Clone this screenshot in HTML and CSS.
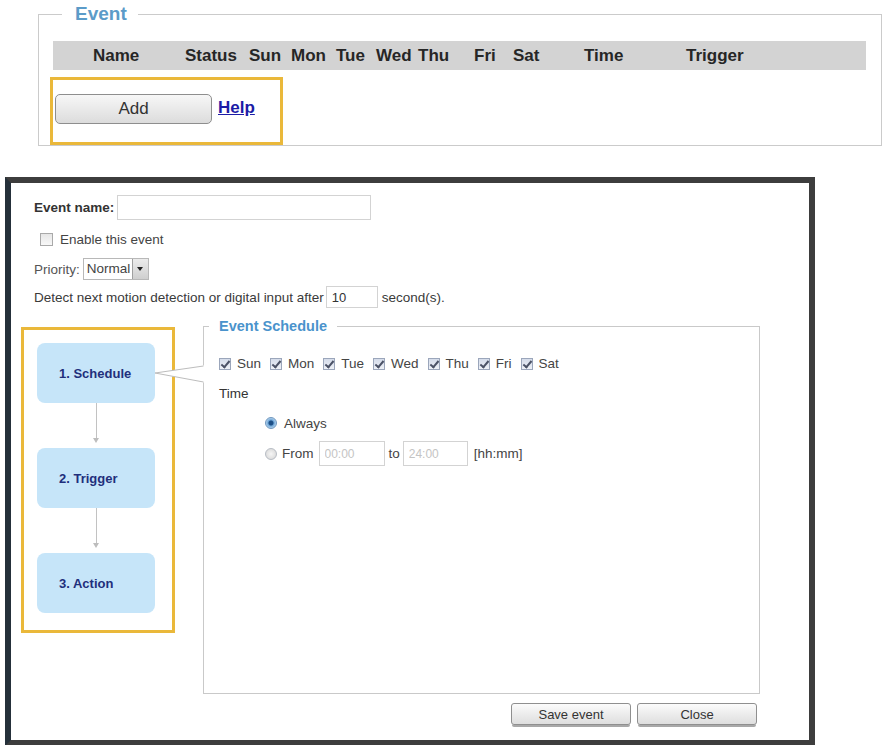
FILE: index.html
```html
<!DOCTYPE html>
<html>
<head lang="en">
    <meta charset="UTF-8">
    <title>Event</title>
    <link rel="stylesheet" href="styles.css">
</head>
<body>
<fieldset id="event">
    <legend>Event</legend>
    <div class="thead">
        <span class="c-name">Name</span>
        <span class="c-status">Status</span>
        <span class="c-sun">Sun</span>
        <span class="c-mon">Mon</span>
        <span class="c-tue">Tue</span>
        <span class="c-wed">Wed</span>
        <span class="c-thu">Thu</span>
        <span class="c-fri">Fri</span>
        <span class="c-sat">Sat</span>
        <span class="c-time">Time</span>
        <span>Trigger</span>
    </div>
    <div class="mark add-row">
        <button class="btn-add">Add</button>
        <a href="#" class="help">Help</a>
    </div>
</fieldset>

<div id="dialog">
    <div class="row r-name">
        <label class="bold">Event name:</label>
        <input type="text" class="txt name-in">
    </div>
    <div class="row r-enable">
        <span class="cb"></span>
        <span class="lbl">Enable this event</span>
    </div>
    <div class="row r-priority">
        <span class="muted">Priority:</span>
        <div class="select">
            <span class="val">Normal</span>
            <span class="drop"></span>
        </div>
    </div>
    <div class="row r-detect">
        <span>Detect next motion detection or digital input after</span>
        <input type="text" class="txt sec-in" value="10">
        <span class="after">second(s).</span>
    </div>

    <div id="main">
        <div class="mark steps">
            <div class="step">1. Schedule</div>
            <div class="arrow"><i></i><b></b></div>
            <div class="step">2. Trigger</div>
            <div class="arrow"><i></i><b></b></div>
            <div class="step">3. Action</div>
        </div>
        <div class="right">
            <fieldset id="schedule">
                <legend>Event Schedule</legend>
                <div class="days">
                    <span class="cb on"></span><span class="day">Sun</span>
                    <span class="cb on"></span><span class="day">Mon</span>
                    <span class="cb on"></span><span class="day">Tue</span>
                    <span class="cb on"></span><span class="day">Wed</span>
                    <span class="cb on"></span><span class="day">Thu</span>
                    <span class="cb on"></span><span class="day">Fri</span>
                    <span class="cb on"></span><span class="day">Sat</span>
                </div>
                <div class="time-lbl">Time</div>
                <div class="opt always">
                    <span class="radio on"></span>
                    <span class="opt-txt">Always</span>
                </div>
                <div class="opt from">
                    <span class="radio"></span>
                    <span class="from-txt">From</span>
                    <input type="text" class="txt t-in" placeholder="00:00">
                    <span class="to-txt">to</span>
                    <input type="text" class="txt t-in t-to" placeholder="24:00">
                    <span class="fmt">[hh:mm]</span>
                </div>
            </fieldset>
            <div class="buttons">
                <button class="btn">Save event</button>
                <button class="btn">Close</button>
            </div>
        </div>
        <!-- pointer from the current step to its panel -->
        <svg class="callout" width="190" height="80" viewBox="0 0 190 80">
            <polygon points="134,55 185,47 185,65" fill="#fff"/>
            <line x1="134" y1="55" x2="182.5" y2="48" stroke="#bdbdbd" stroke-width="1"/>
            <line x1="134" y1="55" x2="182.5" y2="64" stroke="#bdbdbd" stroke-width="1"/>
        </svg>
    </div>
</div>
</body>
</html>
```

FILE: styles.css
```css
*{
    margin: 0;
    padding: 0;
}
body{
    font-family: "Liberation Sans", Arial, sans-serif;
    background: #fff;
    color: #333;
    width: 884px;
    height: 745px;
    overflow: hidden;
}

/* event list */
#event{
    margin: 3px 0 0 38px;
    width: 844px;
    border: 1px solid #cbcbcb;
    padding: 0 15px 0 14px;
    box-sizing: border-box;
}
#event legend{
    margin-left: 9px;
    padding: 0 11px 0 13px;
    font-size: 19px;
    line-height: 22px;
    font-weight: bold;
    color: #5b9bc8;
}
.thead{
    margin-top: 16px;
    height: 29px;
    background: #d3d3d3;
    display: flex;
    padding-left: 40px;
    font-size: 17px;
    line-height: 29px;
    font-weight: bold;
    color: #262626;
}
.c-name{width: 92px;}
.c-status{width: 64px;}
.c-sun{width: 42px;}
.c-mon{width: 45px;}
.c-tue{width: 40px;}
.c-wed{width: 42px;}
.c-thu{width: 56px;}
.c-fri{width: 39px;}
.c-sat{width: 71px;}
.c-time{width: 102px;}

.mark{
    border: 3px solid #eab83a;
    box-sizing: border-box;
}
.add-row{
    margin: 7px 0 0 -3px;
    width: 233px;
    height: 68px;
    padding: 14px 0 0 2px;
    display: flex;
    align-items: flex-start;
}
.btn-add{
    width: 157px;
    height: 30px;
    border: 1px solid #8e8e8e;
    border-radius: 5px;
    background: linear-gradient(#f7f7f7, #dcdcdc);
    font-family: inherit;
    font-size: 17px;
    color: #333;
}
.help{
    margin-left: 6px;
    line-height: 28px;
    font-size: 17px;
    font-weight: bold;
    color: #1c1ca6;
}

/* add event dialog */
#dialog{
    margin: 31px 0 0 5px;
    width: 810px;
    height: 569px;
    border: 6px solid #3d3d3d;
    border-left-color: #25303a;
    box-sizing: border-box;
    padding: 12px 0 0 10px;
    font-size: 13.5px;
    color: #3a3a3a;
}
.row{
    margin-left: 13px;
    display: flex;
    align-items: center;
}
.bold{
    font-weight: bold;
    color: #333;
}
.txt{
    box-sizing: border-box;
    border: 1px solid #d3d3d3;
    font-family: inherit;
    font-size: 13px;
    color: #333;
    padding-left: 5px;
    outline: none;
}
.r-name{height: 25px;}
.name-in{
    margin-left: 3px;
    width: 254px;
    height: 25px;
}
.r-enable{
    margin-top: 10px;
    height: 18px;
    padding-left: 6px;
}
.cb{
    position: relative;
    width: 13px;
    height: 13px;
    box-sizing: border-box;
    border: 1px solid #a9a9a9;
    background: linear-gradient(#e6e6e6, #f8f8f8);
    flex-shrink: 0;
}
.cb.on{
    width: 12px;
    height: 12px;
    border-color: #9ba6bb;
    background: linear-gradient(#d5dcea, #eef1f7);
}
.cb.on::after{
    content: "";
    position: absolute;
    left: 3px;
    top: 0;
    width: 3px;
    height: 7px;
    border: solid #4b5266;
    border-width: 0 2px 2px 0;
    transform: rotate(40deg);
}
.lbl{
    margin-left: 7px;
    color: #444;
}
.r-priority{
    margin-top: 10px;
    height: 22px;
}
.muted{color: #555;}
.select{
    margin-left: 3px;
    width: 66px;
    height: 22px;
    box-sizing: border-box;
    border: 1px solid #b8b8b8;
    display: flex;
}
.select .val{
    flex: 1;
    padding-left: 3px;
    line-height: 20px;
    color: #444;
}
.select .drop{
    width: 15px;
    border-left: 1px solid #a0a0a0;
    background: linear-gradient(#ececec, #cfcfcf);
    display: flex;
    align-items: center;
    justify-content: center;
}
.select .drop::after{
    content: "";
    border-top: 4px solid #222;
    border-left: 3px solid transparent;
    border-right: 3px solid transparent;
}
.r-detect{
    margin-top: 6px;
    height: 22px;
}
.sec-in{
    margin-left: 2px;
    width: 52px;
    height: 22px;
}
.after{margin-left: 4px;}

/* steps and the panel of the current step */
#main{
    position: relative;
    margin-top: 10px;
    display: flex;
}
.steps{
    margin-top: 9px;
    width: 154px;
    height: 306px;
    padding: 13px 0 0 13px;
}
.step{
    width: 118px;
    height: 60px;
    box-sizing: border-box;
    padding-left: 22px;
    border-radius: 8px;
    background: #c6e5f9;
    display: flex;
    align-items: center;
    font-size: 13px;
    font-weight: bold;
    color: #1f2f7c;
}
.arrow{
    width: 118px;
    height: 45px;
    display: flex;
    flex-direction: column;
    align-items: center;
}
.arrow i{
    flex: 1;
    width: 1px;
    background: #c2c2c2;
}
.arrow b{
    margin-bottom: 5px;
    border-top: 5px solid #bdbdbd;
    border-left: 3px solid transparent;
    border-right: 3px solid transparent;
}
.right{
    margin-left: 28px;
    width: 557px;
}
#schedule{
    height: 376px;
    box-sizing: border-box;
    border: 1px solid #c9c9c9;
    padding: 0 0 0 15px;
}
#schedule legend{
    margin-left: -10px;
    padding: 0 10px;
    font-size: 14.5px;
    line-height: 16px;
    font-weight: bold;
    color: #4a93cc;
}
.days{
    margin-top: 22px;
    height: 15px;
    display: flex;
    align-items: center;
    color: #444;
}
.day{
    margin: 0 9px 0 6px;
}
.time-lbl{
    margin-top: 15px;
    line-height: 16px;
    color: #333;
}
.opt{
    padding-left: 46px;
    display: flex;
    align-items: center;
    color: #444;
}
.always{
    margin-top: 13px;
    height: 16px;
}
.from{
    margin-top: 10px;
    height: 25px;
}
.radio{
    width: 12px;
    height: 12px;
    box-sizing: border-box;
    border-radius: 50%;
    border: 1px solid #b7bcc4;
    background: radial-gradient(circle, #f6f6f6, #d4d4d4);
}
.radio.on{
    border-color: #6f97bf;
    background: radial-gradient(circle, #1d4f86 0 2px, #6ea6d8 3px, #d2e6f6 6px);
}
.opt-txt{margin-left: 7px;}
.from-txt{margin-left: 5px;}
.t-in{
    margin-left: 5px;
    width: 66px;
    height: 25px;
    font-size: 12px;
}
.t-in::placeholder{color: #c4c4c4;}
.to-txt{margin-left: 4px;}
.t-to{
    margin-left: 3px;
    width: 65px;
}
.fmt{margin-left: 6px;}
.buttons{
    margin-top: 9px;
    padding-right: 3px;
    display: flex;
    justify-content: flex-end;
    gap: 6px;
}
.btn{
    width: 120px;
    height: 22px;
    border: 1px solid #8f8f8f;
    border-radius: 3px;
    background: linear-gradient(#fbfbfb, #dedede);
    box-shadow: 0 3px 0 -1px #a8a8a8;
    font-family: inherit;
    font-size: 13px;
    color: #333;
}
.callout{
    position: absolute;
    left: 0;
    top: 0;
}
```
